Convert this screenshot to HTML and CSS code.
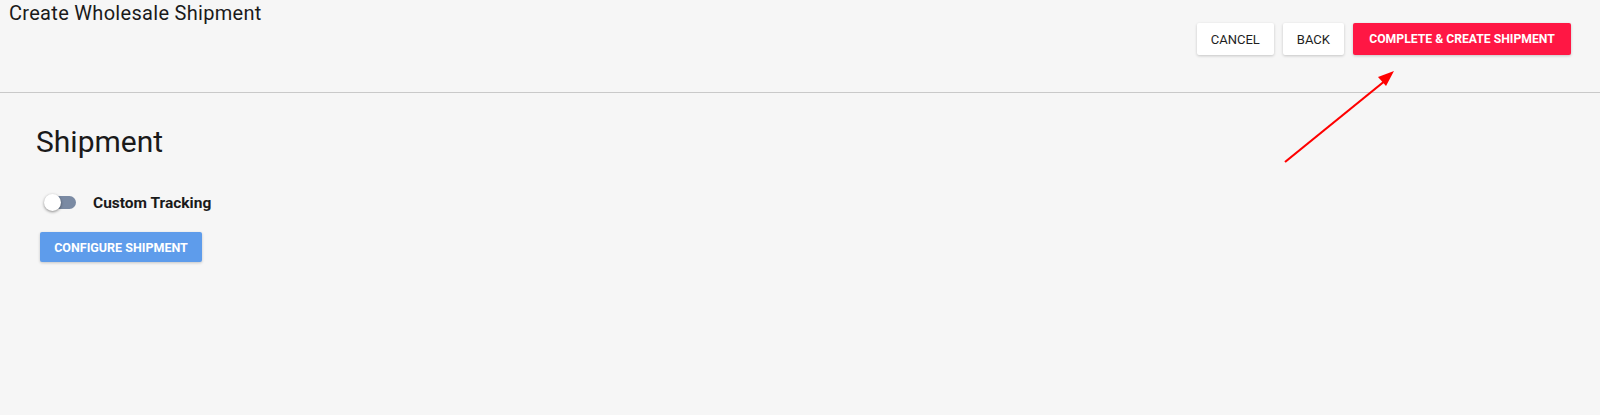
FILE: index.html
```html
<!DOCTYPE html>
<html lang="en">

<head>
  <meta charset="UTF-8">
  <meta name="viewport" content="width=device-width, initial-scale=1.0">
  <title>Create Wholesale Shipment</title>
  <link rel="stylesheet" href="styles.css">
</head>

<body>
  <header class="page-header">
    <h1 class="page-title">Create Wholesale Shipment</h1>
    <div class="actions">
      <button class="btn btn-plain">Cancel</button>
      <button class="btn btn-plain">Back</button>
      <button class="btn btn-danger">Complete &amp; Create Shipment</button>
    </div>
    <svg class="arrow" width="130" height="110" viewBox="0 0 130 110">
      <line x1="6" y1="103" x2="107" y2="21" stroke="#ff0000" stroke-width="2.2" />
      <polygon points="115,12 99,18 107,27" fill="#ff0000" />
    </svg>
  </header>

  <main class="content">
    <h2 class="section-title">Shipment</h2>

    <label class="toggle-row">
      <span class="switch">
        <span class="switch-track"></span>
        <span class="switch-thumb"></span>
      </span>
      <span class="toggle-label">Custom Tracking</span>
    </label>

    <button class="btn btn-primary">Configure Shipment</button>
  </main>
</body>

</html>
```

FILE: styles.css
```css
body {
  margin: 0;
  background-color: #f6f6f6;
  font-family: Roboto, "Liberation Sans", Arial, sans-serif;
  color: #1a1a1a;
  height: 415px;
}

.page-header {
  position: relative;
  height: 92px;
  border-bottom: 1px solid #c9c9c9;
  display: flex;
  justify-content: space-between;
  align-items: flex-start;
}

.page-title {
  margin: 0;
  padding: 1px 0 0 9px;
  font-size: 20px;
  font-weight: 400;
  letter-spacing: 0.3px;
  line-height: 24px;
}

.actions {
  display: flex;
  gap: 9px;
  padding: 23px 29px 0 0;
}

.btn {
  height: 32px;
  border: none;
  border-radius: 2px;
  font-family: Roboto, "Liberation Sans", Arial, sans-serif;
  font-size: 13px;
  font-weight: 500;
  text-transform: uppercase;
  white-space: nowrap;
  padding: 0 14px;
  cursor: pointer;
  box-shadow: 0 1px 3px rgba(0, 0, 0, 0.2);
}

.btn-plain {
  background-color: #fff;
  color: #1e1e1e;
  font-weight: 400;
  padding: 0 14px;
}

.btn-danger {
  background-color: #ff1744;
  color: #fff;
  width: 218px;
  padding: 0;
  font-size: 12.2px;
  font-weight: 700;
}

.btn-primary {
  background-color: #5e9ceb;
  color: #fff;
  height: 30px;
  width: 162px;
  padding: 0;
  font-size: 12.5px;
  font-weight: 700;
  margin-left: 40px;
}

.arrow {
  position: absolute;
  left: 1279px;
  top: 59px;
}

.content {
  padding-top: 31px;
}

.section-title {
  margin: 0 0 0 36px;
  font-size: 30px;
  font-weight: 400;
  line-height: 36px;
}

.toggle-row {
  display: flex;
  align-items: center;
  gap: 17px;
  margin: 34px 0 20px 44px;
}

.switch {
  position: relative;
  width: 32px;
  height: 18px;
  display: inline-block;
}

.switch-track {
  position: absolute;
  left: 1px;
  top: 2px;
  width: 31px;
  height: 13px;
  border-radius: 7px;
  background-color: #7a8aa3;
}

.switch-thumb {
  position: absolute;
  left: 0;
  top: 0;
  width: 17px;
  height: 17px;
  border-radius: 50%;
  background-color: #fff;
  box-shadow: 0 1px 3px rgba(0, 0, 0, 0.45);
}

.toggle-label {
  font-size: 15.5px;
  font-weight: 700;
}
```
